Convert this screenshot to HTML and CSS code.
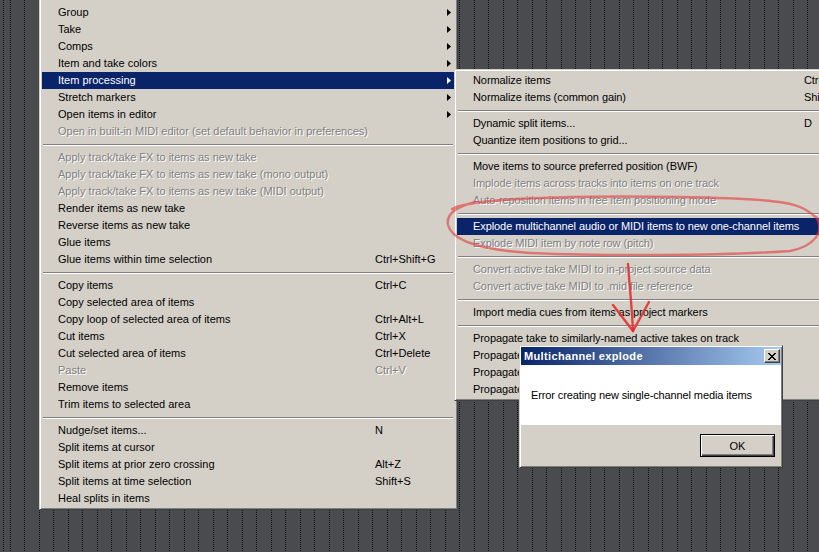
FILE: index.html
```html
<!DOCTYPE html>
<html>
<head>
<meta charset="utf-8">
<link rel="stylesheet" href="styles.css">
</head>
<body>
<div class="desk">
  <div class="menu main">
    <div class="item"><span class="lbl">Group</span><span class="key"></span><span class="arrow"></span></div>
    <div class="item"><span class="lbl">Take</span><span class="key"></span><span class="arrow"></span></div>
    <div class="item"><span class="lbl">Comps</span><span class="key"></span><span class="arrow"></span></div>
    <div class="item"><span class="lbl">Item and take colors</span><span class="key"></span><span class="arrow"></span></div>
    <div class="item hi"><span class="lbl">Item processing</span><span class="key"></span><span class="arrow"></span></div>
    <div class="item"><span class="lbl">Stretch markers</span><span class="key"></span><span class="arrow"></span></div>
    <div class="item"><span class="lbl">Open items in editor</span><span class="key"></span><span class="arrow"></span></div>
    <div class="item dis"><span class="lbl">Open in built-in MIDI editor (set default behavior in preferences)</span><span class="key"></span></div>
    <div class="sep"></div>
    <div class="item dis"><span class="lbl">Apply track/take FX to items as new take</span><span class="key"></span></div>
    <div class="item dis"><span class="lbl">Apply track/take FX to items as new take (mono output)</span><span class="key"></span></div>
    <div class="item dis"><span class="lbl">Apply track/take FX to items as new take (MIDI output)</span><span class="key"></span></div>
    <div class="item"><span class="lbl">Render items as new take</span><span class="key"></span></div>
    <div class="item"><span class="lbl">Reverse items as new take</span><span class="key"></span></div>
    <div class="item"><span class="lbl">Glue items</span><span class="key"></span></div>
    <div class="item"><span class="lbl">Glue items within time selection</span><span class="key">Ctrl+Shift+G</span></div>
    <div class="sep"></div>
    <div class="item"><span class="lbl">Copy items</span><span class="key">Ctrl+C</span></div>
    <div class="item"><span class="lbl">Copy selected area of items</span><span class="key"></span></div>
    <div class="item"><span class="lbl">Copy loop of selected area of items</span><span class="key">Ctrl+Alt+L</span></div>
    <div class="item"><span class="lbl">Cut items</span><span class="key">Ctrl+X</span></div>
    <div class="item"><span class="lbl">Cut selected area of items</span><span class="key">Ctrl+Delete</span></div>
    <div class="item dis"><span class="lbl">Paste</span><span class="key">Ctrl+V</span></div>
    <div class="item"><span class="lbl">Remove items</span><span class="key"></span></div>
    <div class="item"><span class="lbl">Trim items to selected area</span><span class="key"></span></div>
    <div class="sep"></div>
    <div class="item"><span class="lbl">Nudge/set items...</span><span class="key">N</span></div>
    <div class="item"><span class="lbl">Split items at cursor</span><span class="key"></span></div>
    <div class="item"><span class="lbl">Split items at prior zero crossing</span><span class="key">Alt+Z</span></div>
    <div class="item"><span class="lbl">Split items at time selection</span><span class="key">Shift+S</span></div>
    <div class="item"><span class="lbl">Heal splits in items</span><span class="key"></span></div>
  </div>

  <div class="menu submenu">
    <div class="item"><span class="lbl">Normalize items</span><span class="key">Ctrl+Shift+N</span></div>
    <div class="item"><span class="lbl">Normalize items (common gain)</span><span class="key">Shift+N</span></div>
    <div class="sep"></div>
    <div class="item"><span class="lbl">Dynamic split items...</span><span class="key">D</span></div>
    <div class="item"><span class="lbl">Quantize item positions to grid...</span><span class="key"></span></div>
    <div class="sep"></div>
    <div class="item"><span class="lbl">Move items to source preferred position (BWF)</span><span class="key"></span></div>
    <div class="item dis"><span class="lbl">Implode items across tracks into items on one track</span><span class="key"></span></div>
    <div class="item dis"><span class="lbl">Auto-reposition items in free item positioning mode</span><span class="key"></span></div>
    <div class="sep"></div>
    <div class="item hi"><span class="lbl">Explode multichannel audio or MIDI items to new one-channel items</span><span class="key"></span></div>
    <div class="item dis"><span class="lbl">Explode MIDI item by note row (pitch)</span><span class="key"></span></div>
    <div class="sep"></div>
    <div class="item dis"><span class="lbl">Convert active take MIDI to in-project source data</span><span class="key"></span></div>
    <div class="item dis"><span class="lbl">Convert active take MIDI to .mid file reference</span><span class="key"></span></div>
    <div class="sep"></div>
    <div class="item"><span class="lbl">Import media cues from items as project markers</span><span class="key"></span></div>
    <div class="sep"></div>
    <div class="item"><span class="lbl">Propagate take to similarly-named active takes on track</span><span class="key"></span></div>
    <div class="item"><span class="lbl">Propagate take to similarly-named active takes on all tracks</span><span class="key"></span></div>
    <div class="item"><span class="lbl">Propagate take to similarly-named takes on track</span><span class="key"></span></div>
    <div class="item"><span class="lbl">Propagate take to similarly-named takes on all tracks</span><span class="key"></span></div>
  </div>

  <div class="dialog">
    <div class="titlebar">
      <span class="title">Multichannel explode</span>
      <span class="close"><svg width="8" height="7" viewBox="0 0 8 7" shape-rendering="crispEdges"><path d="M0 0h2v1H0zM6 0h2v1H6zM1 1h2v1H1zM5 1h2v1H5zM2 2h4v1H2zM3 3h2v1H3zM2 4h4v1H2zM1 5h2v1H1zM5 5h2v1H5zM0 6h2v1H0zM6 6h2v1H6z" fill="#000"/></svg></span>
    </div>
    <div class="msg">Error creating new single-channel media items</div>
    <div class="buttons"><span class="btn">OK</span></div>
  </div>

  <svg class="marks" width="819" height="552" viewBox="0 0 819 552">
    <path class="loop" d="M452 209 C470 199 560 195 680 197 S800 205 817 218 C824 232 815 246 790 251 C720 256 600 256 530 253 C480 250 452 240 448 225 C446 215 455 207 475 202"/>
    <path class="arrowline" d="M628 264 C630 290 632 310 633 331"/>
    <path class="arrowline" d="M613 305 L633 331 L649 302"/>
  </svg>
</div>
</body>
</html>
```

FILE: styles.css
```css
html, body {
  margin: 0;
  padding: 0;
  overflow: hidden;
}

body {
  font-family: "Liberation Sans", Arial, sans-serif;
  font-size: 11px;
  color: #000;
}

.desk {
  position: relative;
  width: 819px;
  height: 552px;
  overflow: hidden;
  background-color: #4a4b4f;
  background-image:
    repeating-linear-gradient(90deg, transparent 0 1px, #4a4b4f 1px 14px, transparent 14px 15px, #4a4b4f 15px 29px),
    repeating-linear-gradient(180deg, #111214 0 1px, #4a4b4f 1px 2px);
  background-position: 10px 0, 0 0;
}

.menu {
  position: absolute;
  box-sizing: border-box;
  display: flex;
  flex-direction: column;
  background: #d4d0c8;
  border: 1px solid;
  border-color: #d4d0c8 #404040 #404040 #d4d0c8;
  box-shadow: inset 1px 1px #fff, inset -1px -1px #808080;
  padding: 2px;
}

.main {
  left: 39px;
  top: -10px;
  width: 419px;
  padding-top: 13px;
}

.submenu {
  left: 454px;
  top: 69px;
  width: 430px;
}

.item {
  display: grid;
  grid-template-columns: 317px 1fr 4px;
  align-items: center;
  height: 17px;
  line-height: 17px;
  padding: 0 4px 0 16px;
  white-space: nowrap;
}

.submenu .item {
  grid-template-columns: 331px 1fr 4px;
  letter-spacing: -0.08px;
}

.lbl, .key {
  overflow: visible;
}

.item.hi {
  background: #0a246a;
  color: #fff;
}

.item.dis {
  color: #808080;
  text-shadow: 1px 1px 0 #fff;
}

.arrow {
  display: block;
  width: 4px;
  height: 7px;
  background: currentColor;
  clip-path: polygon(0 0, 100% 50%, 0 100%);
}

.sep {
  height: 9px;
  margin: 0 2px 0 1px;
  background: linear-gradient(180deg, transparent 0 4px, #808080 4px 5px, #fff 5px 6px, transparent 6px);
}

.dialog {
  position: absolute;
  left: 519px;
  top: 345px;
  width: 264px;
  height: 123px;
  box-sizing: border-box;
  display: flex;
  flex-direction: column;
  background: #d4d0c8;
  border: 1px solid;
  border-color: #d4d0c8 #404040 #404040 #d4d0c8;
  box-shadow: inset 1px 1px #fff, inset -1px -1px #808080;
  padding: 1px;
}

.titlebar {
  display: flex;
  justify-content: space-between;
  align-items: flex-start;
  height: 18px;
  box-sizing: border-box;
  padding: 2px 1px 0 3px;
  background: linear-gradient(90deg, #0a246a, #a6caf0);
}

.title {
  color: #fff;
  font-weight: bold;
  letter-spacing: 0.35px;
  line-height: 14px;
}

.close {
  box-sizing: border-box;
  width: 16px;
  height: 14px;
  display: flex;
  align-items: center;
  justify-content: center;
  background: #d4d0c8;
  border: 1px solid;
  border-color: #fff #404040 #404040 #fff;
  box-shadow: inset -1px -1px #808080;
}

.msg {
  height: 60px;
  display: flex;
  align-items: center;
  padding-left: 10px;
  letter-spacing: -0.12px;
  background: #fff;
}

.buttons {
  display: flex;
  justify-content: flex-end;
  padding: 9px 6px 0 0;
}

.btn {
  box-sizing: border-box;
  width: 75px;
  height: 23px;
  display: flex;
  align-items: center;
  justify-content: center;
  border: 1px solid #000;
  box-shadow: inset 1px 1px #fff, inset -1px -1px #404040, inset -2px -2px #808080;
}

.marks {
  position: absolute;
  left: 0;
  top: 0;
  pointer-events: none;
}

.loop {
  fill: none;
  stroke: rgba(226, 70, 70, 0.66);
  stroke-width: 2.4;
  stroke-linecap: round;
}

.arrowline {
  fill: none;
  stroke: rgba(228, 40, 40, 0.85);
  stroke-width: 2.4;
  stroke-linecap: round;
  stroke-linejoin: round;
}
```
